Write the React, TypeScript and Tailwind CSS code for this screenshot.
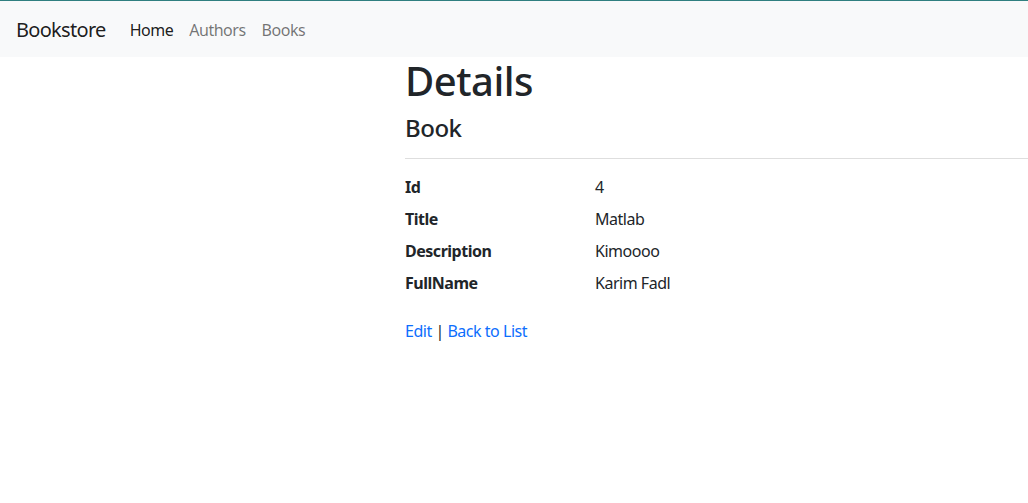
export default function App() {
  const rows = [
    ["Id", "4"],
    ["Title", "Matlab"],
    ["Description", "Kimoooo"],
    ["FullName", "Karim Fadl"],
  ];
  return (
    <div className="min-h-[503px] bg-white text-[#212529] text-[16px] leading-[24px] tracking-[-0.03em]" style={{ fontFamily: '"Noto Sans", sans-serif' }}>
      <nav className="h-[57px] bg-[#f8f9fa] border-t border-[#2f7f80] flex items-center px-[16px] pt-[2px]">
        <span className="text-[20px] leading-[30px] text-[rgba(0,0,0,0.9)] mr-[16px] tracking-[-0.035em]">Bookstore</span>
        <div className="flex">
          <a className="px-[8px] py-[8px] text-[rgba(0,0,0,0.9)]">Home</a>
          <a className="px-[8px] py-[8px] text-[rgba(0,0,0,0.55)]">Authors</a>
          <a className="px-[8px] py-[8px] text-[rgba(0,0,0,0.55)]">Books</a>
        </div>
      </nav>
      <main className="ml-[405px] pt-[1px]">
        <h1 className="text-[40px] leading-[48px] font-medium mb-[8px] -mt-[1px]">Details</h1>
        <div>
          <h4 className="text-[24px] leading-[29px] font-medium mb-[16px]">Book</h4>
          <hr className="border-0 border-t border-[#dedede] mb-[16px]" />
          <dl className="flex flex-col mb-[16px]">
            {rows.map(([k, v]) => (
              <div key={k} className="flex mb-[8px]">
                <dt className="w-[190px] font-bold">{k}</dt>
                <dd>{v}</dd>
              </div>
            ))}
          </dl>
        </div>
        <div>
          <a className="text-[#0d6efd]">Edit</a> | <a className="text-[#0d6efd]">Back to List</a>
        </div>
      </main>
    </div>
  );
}
